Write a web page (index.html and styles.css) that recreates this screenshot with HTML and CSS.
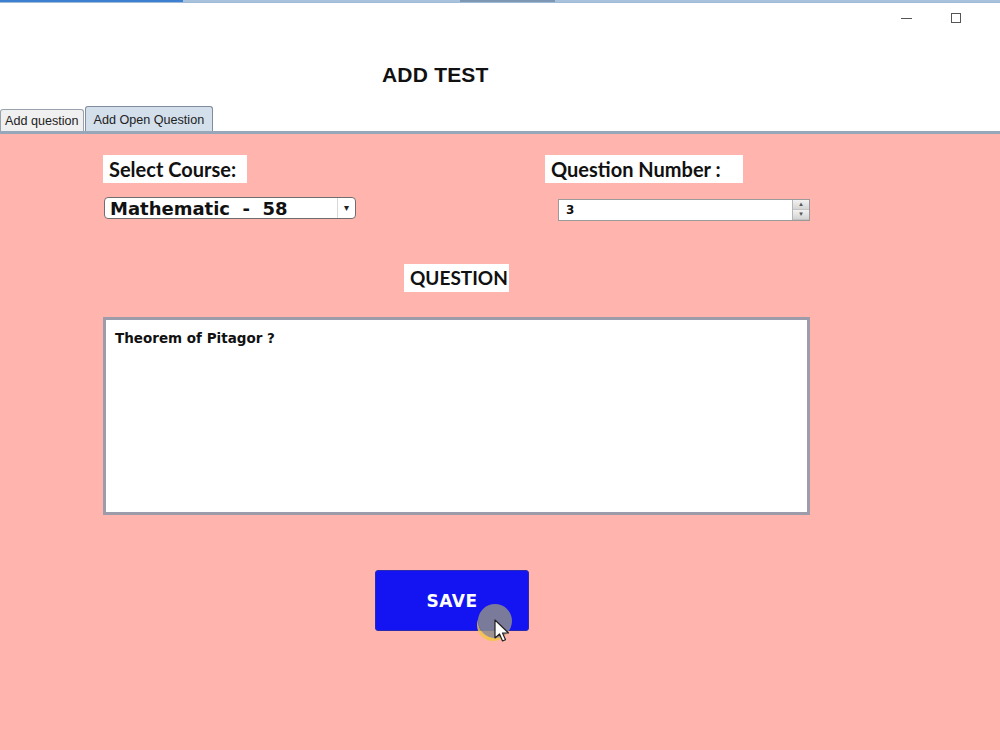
FILE: index.html
```html
<!DOCTYPE html>
<html lang="en">
<head>
  <meta charset="UTF-8" />
  <title>Add Test</title>
  <link rel="stylesheet" href="styles.css">
</head>
<body>

  <div class="topline">
    <span class="seg seg-a"></span>
    <span class="seg seg-b"></span>
    <span class="seg seg-c"></span>
    <span class="seg seg-d"></span>
  </div>

  <div class="header">
    <div class="controls">
      <span class="ctl-min"></span>
      <span class="ctl-max"></span>
    </div>
    <h1 class="title">ADD TEST</h1>
  </div>

  <div class="tabs">
    <div class="tab">Add question</div>
    <div class="tab active">Add Open Question</div>
  </div>

  <div class="panel">
    <div class="top-row">
      <div class="field">
        <div class="label label-course">Select Course:</div>
        <div class="combo">
          <span>Mathematic&nbsp; - &nbsp;58</span>
          <span class="arrow">&#9662;</span>
        </div>
      </div>
      <div class="field">
        <div class="label label-number">Question Number :</div>
        <div class="spinner">
          <span>3</span>
          <span class="spin">
            <span class="spin-btn">&#9652;</span>
            <span class="spin-btn">&#9662;</span>
          </span>
        </div>
      </div>
    </div>

    <div class="question">
      <div class="label label-question">QUESTION</div>
      <div class="textbox">Theorem of Pitagor ?</div>
    </div>

    <div class="actions">
      <button class="btn">SAVE</button>
      <!-- mouse pointer from the recording -->
      <span class="cursor">
        <svg width="22" height="26" viewBox="0 0 22 26">
          <path d="M3 2 L3 20 L7.5 16 L10.5 23 L13.5 21.7 L10.5 15 L16.5 15 Z" fill="#fff" stroke="#222" stroke-width="1.2" stroke-linejoin="round"/>
        </svg>
      </span>
    </div>
  </div>

</body>
</html>
```

FILE: styles.css
```css
body {
  margin: 0;
  background-color: #ffb5ad;
  font-family: "Liberation Sans", Arial, sans-serif;
  color: #111;
  width: 1000px;
  height: 750px;
  overflow: hidden;
}

.topline {
  display: flex;
  height: 3px;
  background: #9fbbd8;
}

.seg {
  display: block;
  height: 2px;
}

.seg-a {
  width: 183px;
  background: #3d7fd0;
}

.seg-b {
  width: 277px;
  background: #a9c2dc;
}

.seg-c {
  width: 95px;
  background: #7d96b3;
}

.seg-d {
  flex: 1;
  background: #a9c2dc;
}

.header {
  background: #fff;
  height: 103px;
  position: relative;
}

.controls {
  position: absolute;
  top: 10px;
  right: 39px;
  display: flex;
  align-items: center;
  gap: 39px;
}

.ctl-min {
  width: 11px;
  height: 1px;
  background: #555;
}

.ctl-max {
  width: 8px;
  height: 8px;
  border: 1.5px solid #555;
}

.title {
  margin: 0;
  padding-top: 60px;
  padding-left: 382px;
  font-size: 21px;
  font-weight: bold;
  letter-spacing: 0.2px;
}

.tabs {
  background: #fff;
  height: 25px;
  display: flex;
  align-items: flex-end;
  border-bottom: 3px solid #97a6b8;
}

.tab {
  height: 21px;
  line-height: 22px;
  padding: 0 4px;
  font-size: 12.6px;
  color: #222;
  background: #f0f0f0;
  border: 1px solid #9aa3ad;
  border-bottom: none;
  border-radius: 3px 3px 0 0;
}

.tab.active {
  height: 24px;
  line-height: 26px;
  padding: 0 8px;
  margin-left: 1px;
  background: #d3dfeb;
  border-color: #7f8d9e;
}

.panel {
  padding: 21px 0 0 103px;
}

.top-row {
  display: grid;
  grid-template-columns: 442px 270px;
}

.label {
  display: inline-block;
  box-sizing: border-box;
  background: #fff;
  font-family: Lato, "Open Sans", sans-serif;
  font-weight: bold;
  font-size: 20px;
  line-height: 28px;
  padding: 0 0 0 6px;
  color: #111;
  text-align: left;
  vertical-align: top;
}

.label-course {
  width: 144px;
}

.label-number {
  width: 198px;
}

.label-question {
  font-size: 19px;
  width: 105px;
}

.combo {
  margin-top: 14px;
  margin-left: 1px;
  width: 252px;
  height: 22px;
  box-sizing: border-box;
  background: #fff;
  border: 1px solid #6e6e6e;
  border-radius: 4px;
  display: flex;
  align-items: center;
  justify-content: space-between;
  padding-left: 5px;
  font-family: "DejaVu Sans", Verdana, sans-serif;
  font-weight: bold;
  font-size: 18px;
}

.arrow {
  font-size: 10px;
  color: #222;
  width: 17px;
  text-align: center;
  border-left: 1px solid #d8d8d8;
  height: 20px;
  line-height: 20px;
}

.spinner {
  margin-top: 16px;
  margin-left: 13px;
  width: 252px;
  height: 22px;
  background: #fff;
  border: 1px solid #9a9a9a;
  display: flex;
  align-items: center;
  justify-content: space-between;
  padding-left: 7px;
  box-sizing: border-box;
  font-family: "DejaVu Sans", Verdana, sans-serif;
  font-weight: bold;
  font-size: 12px;
}

.spin {
  display: flex;
  flex-direction: column;
  width: 16px;
  height: 20px;
  border-left: 1px solid #b5b5b5;
}

.spin-btn {
  flex: 1;
  background: linear-gradient(#f2f2f2, #d4d4d4);
  border-bottom: 1px solid #c4c4c4;
  font-size: 7px;
  line-height: 9px;
  text-align: center;
  color: #555;
}

.question {
  margin-top: 43px;
  width: 707px;
  text-align: center;
}

.textbox {
  margin-top: 25px;
  height: 198px;
  background: #fff;
  border: 3px solid #9c9cab;
  text-align: left;
  padding: 10px 9px;
  box-sizing: border-box;
  font-family: "DejaVu Sans", Tahoma, sans-serif;
  font-weight: bold;
  font-size: 13.5px;
  color: #111;
}

.actions {
  margin-top: 55px;
  padding-left: 272px;
  position: relative;
}

.btn {
  width: 154px;
  height: 61px;
  background: #1414f2;
  color: #fff;
  border: 1px solid #2a2ab0;
  border-radius: 3px;
  font-family: "DejaVu Sans", Verdana, sans-serif;
  font-weight: bold;
  font-size: 17px;
  letter-spacing: 0.5px;
  cursor: pointer;
}

.cursor {
  position: absolute;
  left: 375px;
  top: 34px;
  width: 34px;
  height: 34px;
  border-radius: 50%;
  background: rgba(140, 140, 140, 0.85);
  box-shadow: -2px 4px 0 -1px rgba(240, 200, 60, 0.8);
}

.cursor svg {
  position: absolute;
  left: 14px;
  top: 14px;
}
```
